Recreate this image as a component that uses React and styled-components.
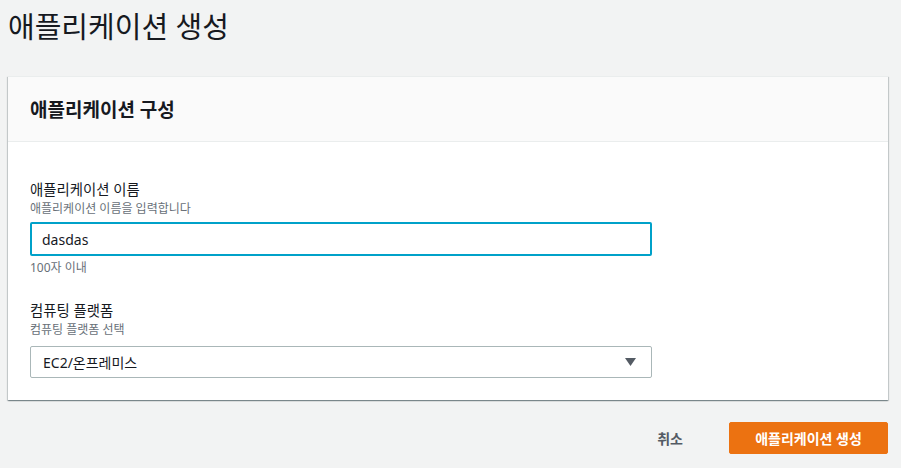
import React from 'react'
import styled, { createGlobalStyle } from 'styled-components'

const GlobalStyle = createGlobalStyle`
    html, body {
        margin: 0;
        padding: 0;
        background: #f2f3f3;
    }
    body {
        font-family: "Noto Sans", "Noto Sans CJK KR", sans-serif;
        color: #16191f;
    }
`

export default function App() {
    return (
        <>
            <GlobalStyle />
            <Page>
                <Title>애플리케이션 생성</Title>
                <Card>
                    <CardHeader>애플리케이션 구성</CardHeader>
                    <CardBody>
                        <Field>
                            <Label>애플리케이션 이름</Label>
                            <Description>애플리케이션 이름을 입력합니다</Description>
                            <Input defaultValue="dasdas" />
                            <Hint>100자 이내</Hint>
                        </Field>
                        <Field>
                            <Label>컴퓨팅 플랫폼</Label>
                            <Description>컴퓨팅 플랫폼 선택</Description>
                            <Select>
                                <span>EC2/온프레미스</span>
                                <svg width="11" height="8" viewBox="0 0 11 8">
                                    <path d="M0 0 H11 L5.5 8 Z" fill="#545b64" />
                                </svg>
                            </Select>
                        </Field>
                    </CardBody>
                </Card>
                <Footer>
                    <TextButton>취소</TextButton>
                    <PrimaryButton>애플리케이션 생성</PrimaryButton>
                </Footer>
            </Page>
        </>
    )
}

const Page = styled.div`
    width: 880px;
    padding: 7px 0 0 8px;
`

const Title = styled.h1`
    margin: 0;
    font-size: 29px;
    font-weight: 400;
    line-height: 40px;
    color: #16191f;
`

const Card = styled.div`
    margin-top: 29px;
    background: #fff;
    border-top: 1px solid #eaeded;
    box-shadow: 0 1px 1px 0 rgba(0, 28, 36, 0.3),
        1px 1px 1px 0 rgba(0, 28, 36, 0.15),
        -1px 1px 1px 0 rgba(0, 28, 36, 0.15);
`

const CardHeader = styled.div`
    height: 64px;
    display: flex;
    align-items: center;
    padding: 0 22px;
    background: #fafafa;
    border-bottom: 1px solid #eaeded;
    font-size: 19px;
    font-weight: 700;
`

const CardBody = styled.div`
    padding: 37px 22px 22px;
    display: flex;
    flex-direction: column;
    gap: 24px;
`

const Field = styled.div`
    display: flex;
    flex-direction: column;
`

const Label = styled.div`
    font-size: 14.4px;
    line-height: 22px;
    color: #16191f;
`

const Description = styled.div`
    font-size: 12px;
    line-height: 16px;
    color: #687078;
`

const Input = styled.input`
    box-sizing: border-box;
    width: 622px;
    height: 34px;
    margin-top: 5px;
    padding: 0 10px;
    border: 2px solid #00a1c9;
    border-radius: 2px;
    font-family: inherit;
    font-size: 14px;
    color: #16191f;
    outline: none;
`

const Hint = styled.div`
    margin-top: 4px;
    font-size: 12px;
    line-height: 16px;
    color: #687078;
`

const Select = styled.div`
    box-sizing: border-box;
    width: 622px;
    height: 32px;
    margin-top: 8px;
    padding: 0 15px 0 12px;
    display: flex;
    align-items: center;
    justify-content: space-between;
    border: 1px solid #aab7b8;
    border-radius: 2px;
    font-size: 14px;
    color: #16191f;
`

const Footer = styled.div`
    display: flex;
    justify-content: flex-end;
    align-items: center;
    margin-top: 22px;
    gap: 26px;
`

const TextButton = styled.button`
    background: none;
    border: none;
    padding: 4px 20px;
    font-family: inherit;
    font-size: 14px;
    font-weight: 700;
    color: #545b64;
`

const PrimaryButton = styled.button`
    height: 32px;
    width: 159px;
    background: #ec7211;
    border: 1px solid #ec7211;
    border-radius: 2px;
    font-family: inherit;
    font-size: 14px;
    font-weight: 700;
    color: #fff;
`
